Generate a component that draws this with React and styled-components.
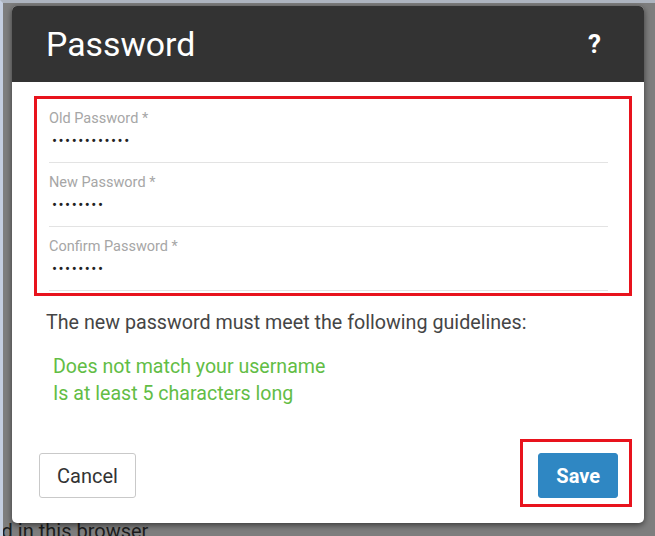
import React from 'react';
import styled, { createGlobalStyle } from 'styled-components'

const GlobalStyle = createGlobalStyle`
  body {
    margin: 0;
    font-family: Roboto, "Liberation Sans", Arial, sans-serif;
  }
`

const Page = styled.div`
  position: relative;
  width: 655px;
  height: 536px;
  overflow: hidden;
  background: #7e7e7e;
  box-sizing: border-box;
  border-left: 3px solid #c4cee0;
  border-top: 3px solid #aeb5c0;
  display: flex;
  flex-direction: column;
  justify-content: flex-end;
`

const BehindText = styled.div`
  font-size: 20px;
  line-height: 20px;
  color: #1c1c1c;
  margin: 0 0 -5px -12px;
`

const Modal = styled.div`
  position: absolute;
  top: 3px;
  left: 9px;
  width: 632px;
  height: 517px;
  background: #fff;
  border-radius: 5px;
  box-shadow: 0 2px 6px rgba(0, 0, 0, 0.55);
  display: flex;
  flex-direction: column;
`

const Header = styled.div`
  height: 76px;
  background: #333333;
  border-radius: 5px 5px 0 0;
  display: flex;
  align-items: center;
  justify-content: space-between;
  padding: 0 43px 0 34px;
`

const Title = styled.h1`
  margin: 0;
  font-size: 33.8px;
  font-weight: 400;
  color: #fff;
`

const Help = styled.span`
  font-size: 26px;
  font-weight: 700;
  color: #fff;
`

const Body = styled.div`
  padding: 14px 12px 0 22px;
  display: flex;
  flex-direction: column;
`

const FieldGroup = styled.div`
  border: 3px solid #e8131d;
  padding: 0 21px 2px 12px;
`

const Field = styled.div`
  padding: 13px 0 11px;
  border-bottom: 1px solid #e3e3e3;
  display: flex;
  flex-direction: column;
`

const Label = styled.label`
  font-size: 14.5px;
  line-height: 14px;
  color: #a6a6a6;
`

const Input = styled.input`
  border: none;
  outline: none;
  height: 20px;
  margin-top: 5px;
  padding: 0 3px;
  font-family: Roboto, sans-serif;
  font-size: 15px;
  letter-spacing: 1.5px;
  color: #222;
  background: transparent;
`

const Guidelines = styled.p`
  margin: 15px 0 0 12px;
  font-size: 19.7px;
  line-height: 24px;
  color: #454545;
`

const Rules = styled.ul`
  list-style: none;
  margin: 18px 0 0;
  padding-left: 19px;
`

const Rule = styled.li`
  font-size: 19.6px;
  line-height: 27px;
  color: #62bd45;
`

const Footer = styled.div`
  margin-top: 32px;
  display: flex;
  justify-content: space-between;
  align-items: flex-start;
  padding-left: 5px;
`

const Button = styled.button`
  height: 45px;
  padding: 0 17px;
  font-family: Roboto, sans-serif;
  font-size: 20px;
  border-radius: 3px;
  cursor: pointer;
  border: 1px solid ${p => (p.primary ? '#2f87c3' : '#c9c9c9')};
  background: ${p => (p.primary ? '#2f87c3' : '#fff')};
  color: ${p => (p.primary ? '#fff' : '#333')};
  font-weight: ${p => (p.primary ? 700 : 400)};
`

const CancelButton = styled(Button)`
  margin-top: 14px;
`

const Highlight = styled.div`
  border: 3px solid #e8131d;
  padding: 11px 11px 6px 15px;
`

const fields = [
  { label: 'Old Password *', value: 'oldpassword1' },
  { label: 'New Password *', value: 'newpass1' },
  { label: 'Confirm Password *', value: 'newpass1' },
]

export default function App() {
  return (
    <Page>
      <GlobalStyle />
      <BehindText>ed in this browser</BehindText>
      <Modal>
        <Header>
          <Title>Password</Title>
          <Help>?</Help>
        </Header>
        <Body>
          <FieldGroup>
            {fields.map(f => (
              <Field key={f.label}>
                <Label>{f.label}</Label>
                <Input type="password" defaultValue={f.value} readOnly />
              </Field>
            ))}
          </FieldGroup>
          <Guidelines>The new password must meet the following guidelines:</Guidelines>
          <Rules>
            <Rule>Does not match your username</Rule>
            <Rule>Is at least 5 characters long</Rule>
          </Rules>
          <Footer>
            <CancelButton>Cancel</CancelButton>
            <Highlight>
              <Button primary>Save</Button>
            </Highlight>
          </Footer>
        </Body>
      </Modal>
    </Page>
  )
}
